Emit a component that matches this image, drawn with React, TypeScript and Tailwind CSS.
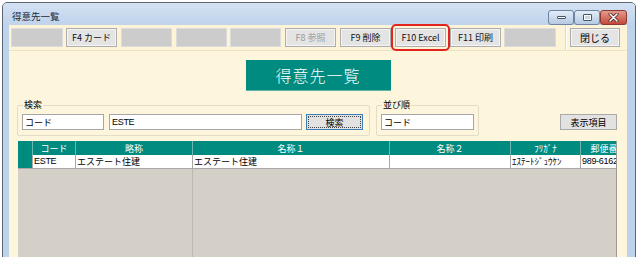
import React from "react";

const toolbarButtons: { label: string; cls: string; kind: "blank" | "btn" | "disabled" }[] = [
  { label: "", cls: "ml-[2px] w-[52px]", kind: "blank" },
  { label: "F4 カード", cls: "ml-[3px] w-[51px]", kind: "btn" },
  { label: "", cls: "ml-[4px] w-[51px]", kind: "blank" },
  { label: "", cls: "ml-[4px] w-[51px]", kind: "blank" },
  { label: "", cls: "ml-[3px] w-[51px]", kind: "blank" },
  { label: "F8 参照", cls: "ml-[4px] w-[51px]", kind: "disabled" },
  { label: "F9 削除", cls: "ml-[4px] w-[51px]", kind: "btn" },
  { label: "F10 Excel", cls: "ml-[4px] w-[51px]", kind: "btn" },
  { label: "F11 印刷", cls: "ml-[4px] w-[51px]", kind: "btn" },
  { label: "", cls: "ml-[3px] w-[52px]", kind: "blank" },
];

const columns: { label: string; cls: string }[] = [
  { label: "コード", cls: "w-[43px]" },
  { label: "略称", cls: "w-[117px]" },
  { label: "名称１", cls: "w-[197px]" },
  { label: "名称２", cls: "w-[121px]" },
  { label: "ﾌﾘｶﾞﾅ", cls: "w-[70px]" },
  { label: "郵便番号", cls: "w-[56px]" },
];

const row: string[] = ["ESTE", "エステート住建", "エステート住建", "", "ｴｽﾃｰﾄｼﾞｭｳｹﾝ", "989-6162"];

export default function App() {
  return (
    <div className="w-[640px] h-[257px] bg-white overflow-hidden font-['Noto_Sans_CJK_JP',sans-serif] text-[9px] text-black">
      <div className="ml-[2px] mt-[2px] w-[634px] h-[260px] border border-[#5b6573] rounded-t-[5px] bg-[#bed2ea] flex flex-col">
        {/* Title bar */}
        <div className="h-[24px] flex items-start bg-gradient-to-b from-[#d4e2f3] to-[#bfd3ea] rounded-t-[4px]">
          <div className="ml-[9px] mt-[8px] text-[9.5px] leading-[11px] text-[#1f2a38]">得意先一覧</div>
          <div className="ml-auto mr-[8px] mt-[7px] flex">
            <div className="w-[26px] h-[15px] rounded-[3px] border border-[#6e84a0] bg-gradient-to-b from-[#e4edf8] to-[#b5c9e2] flex items-center justify-center">
              <div className="w-[9px] h-[3px] bg-white border border-[#44546a] rounded-[1px]" />
            </div>
            <div className="w-[26px] h-[15px] rounded-[3px] border border-[#6e84a0] bg-gradient-to-b from-[#e4edf8] to-[#b5c9e2] flex items-center justify-center">
              <div className="w-[9px] h-[7px] bg-white border border-[#44546a] rounded-[1px] flex items-center justify-center">
                <div className="w-[5px] h-[3px] bg-[#c9d6e6]" />
              </div>
            </div>
            <div className="w-[27px] h-[15px] rounded-[3px] border border-[#8a3a30] bg-gradient-to-b from-[#e49a8c] to-[#c4473a] flex items-center justify-center">
              <svg width="11" height="9" viewBox="0 0 11 9">
                <path d="M2 1 L9 8 M9 1 L2 8" stroke="#3a1a16" strokeWidth="3" strokeLinecap="round" />
                <path d="M2 1 L9 8 M9 1 L2 8" stroke="#ffffff" strokeWidth="1.6" strokeLinecap="round" />
              </svg>
            </div>
          </div>
        </div>

        <div className="ml-[6px] w-[618px] flex-1 bg-[#fef6dc] flex flex-col">
          {/* Toolbar */}
          <div className="relative h-[26px] flex items-center border-b border-[#ece2c4] bg-[#fdf3d6]">
            {toolbarButtons.map((b, i) =>
              b.kind === "blank" ? (
                <div key={i} className={`${b.cls} h-[19px] bg-[#cccccc] border border-[#dcdcdc]`} />
              ) : (
                <div
                  key={i}
                  className={`${b.cls} h-[19px] bg-[#e4e4e4] border border-[#adadad] shadow-[inset_0_0_0_1px_#f4f4f4] flex items-center justify-center leading-none ${
                    b.kind === "disabled" ? "text-[#9a9a9a]" : "text-[#111111]"
                  }`}
                >
                  {b.label}
                </div>
              )
            )}
            <div className="ml-[9px] self-stretch w-[2px] border-l border-[#e2d8bc] border-r border-r-white" />
            <div className="ml-[3px] w-[50px] h-[19px] bg-[#e4e4e4] border border-[#adadad] shadow-[inset_0_0_0_1px_#f4f4f4] flex items-center justify-center text-[10px] leading-none">
              閉じる
            </div>
            <div className="absolute left-[382px] top-[-1px] w-[59px] h-[27px] border-2 border-[#e3241c] rounded-[5px]" />
          </div>

          {/* Heading */}
          <div className="mt-[9px] mx-auto w-[145px] h-[31px] bg-[#008b80] border-b border-[#5fb3aa] flex items-center justify-center text-white text-[16px] tracking-[1px] font-light leading-none">
            得意先一覧
          </div>

          {/* Search row */}
          <div className="mt-[14px] flex items-start">
            <div className="relative ml-[8px] w-[353px] h-[31px] border border-[#e3dcc6] rounded-[2px] flex items-start pt-[8px] pl-[4px]">
              <div className="absolute left-[5px] top-[-6px] px-[1px] bg-[#fef6dc] leading-[10px] text-[9px]">検索</div>
              <div className="w-[82px] h-[16px] bg-white border border-[#a6a6a6] flex items-center pl-[2px] leading-none">コード</div>
              <div className="ml-[5px] w-[193px] h-[16px] bg-white border border-[#a6a6a6] flex items-center pl-[2px] leading-none font-['Liberation_Sans',sans-serif] text-[9px] tracking-[-0.3px]">ESTE</div>
              <div className="ml-[4px] w-[57px] h-[16px] bg-[#e2e2e2] border border-[#3d7fb8] flex items-center justify-center p-[1px]">
                <div className="w-full h-full border border-dotted border-[#444444] flex items-center justify-center leading-none">検索</div>
              </div>
            </div>
            <div className="relative ml-[6px] w-[103px] h-[31px] border border-[#e3dcc6] rounded-[2px] flex items-start pt-[8px] pl-[4px]">
              <div className="absolute left-[5px] top-[-6px] px-[1px] bg-[#fef6dc] leading-[10px] text-[9px]">並び順</div>
              <div className="w-[93px] h-[16px] bg-white border border-[#a6a6a6] flex items-center pl-[2px] leading-none">コード</div>
            </div>
            <div className="ml-auto mr-[10px] mt-[9px] w-[57px] h-[16px] bg-[#e2e2e2] border border-[#a9a9a9] flex items-center justify-center leading-none">
              表示項目
            </div>
          </div>

          {/* Grid */}
          <div className="mt-[5px] ml-[9px] w-[599px] h-[120px] bg-[#d4d0c8] border-r border-[#9d9a93] overflow-hidden flex flex-col">
            <div className="flex h-[14px] bg-[#008b80] text-white">
              <div className="w-[15px] shrink-0 border-r border-[#6bb8b0]" />
              {columns.map((c, i) => (
                <div key={i} className={`${c.cls} shrink-0 border-r border-[#6bb8b0] flex items-center justify-center leading-none whitespace-nowrap overflow-hidden`}>
                  {c.label}
                </div>
              ))}
            </div>
            <div className="flex h-[14px] bg-white border-b border-[#a8a8a8]">
              <div className="w-[15px] shrink-0 bg-[#008b80] border-r border-[#a8a8a8]" />
              {columns.map((c, i) => (
                <div
                  key={i}
                  className={`${c.cls} shrink-0 border-r border-[#a8a8a8] flex items-center pl-[1px] leading-none whitespace-nowrap overflow-hidden ${
                    i === 0 || i === 5 ? "font-['Liberation_Sans',sans-serif] tracking-[-0.3px]" : ""
                  }`}
                >
                  {row[i]}
                </div>
              ))}
            </div>
            <div className="flex-1 flex">
              <div className="w-[175px] shrink-0 border-r border-[#bdb9b1]" />
            </div>
          </div>
        </div>
      </div>
    </div>
  );
}
